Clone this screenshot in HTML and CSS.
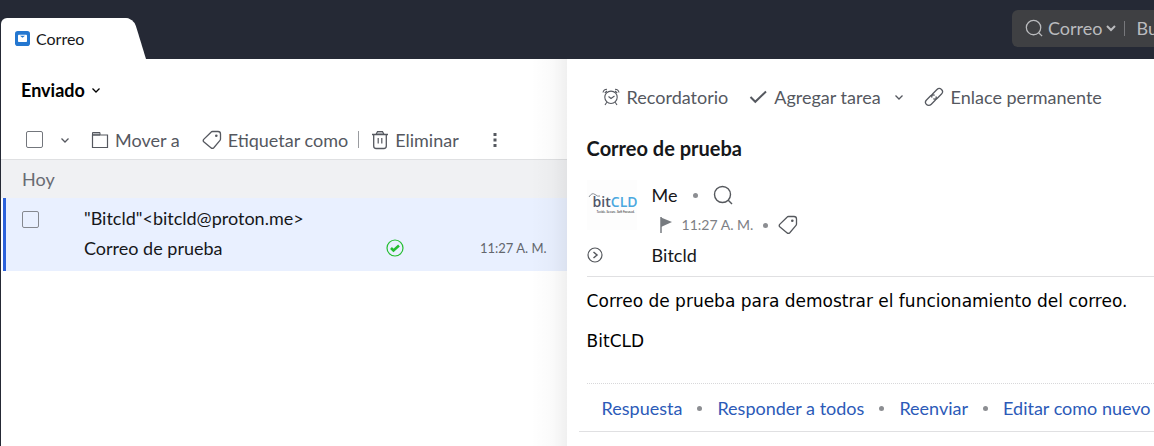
FILE: index.html
```html
<!DOCTYPE html>
<html lang="es">
<head>
<meta charset="utf-8">
<title>Correo</title>
<meta name="viewport" content="width=device-width, initial-scale=1">
<link rel="stylesheet" href="styles.css">
</head>
<body>
<svg class="sprite" aria-hidden="true">
  <symbol id="i-chevron" viewBox="0 0 10 10"><path d="M1.500 3.500 5 7l3.500-3.500" fill="none" stroke="currentColor" stroke-width="1.300"/></symbol>
  <symbol id="i-search" viewBox="0 0 20 20"><circle cx="9.500" cy="9.500" r="8" fill="none" stroke="currentColor" stroke-width="1.400"/><path d="m15 15 4 4" stroke="currentColor" stroke-width="1.400"/></symbol>
  <symbol id="i-tag" viewBox="0 0 20 20"><path d="M10.500 1.500H16q2.500 0 2.500 2.500v5q0 .8-.5 1.400l-6.200 7.300q-1.400 1.300-2.900 0l-6.900-5.600q-1.400-1.300-.3-2.700L9 2.200q.6-.7 1.500-.7Z" fill="none" stroke="currentColor" stroke-width="1.300"/><circle cx="14.300" cy="5.800" r="1.300" fill="currentColor"/></symbol>
</svg>

<header class="topbar">
  <div class="tab" role="tab" aria-selected="true">
    <svg class="tab-icon" viewBox="0 0 16 16"><rect width="16" height="16" rx="3" fill="#2477d0"/><path d="M4 4h8a.8.8 0 0 1 .8.8v6a.8.8 0 0 1-.8.8H4a.8.8 0 0 1-.8-.8v-6A.8.8 0 0 1 4 4Z" fill="#fff"/><path d="M5.300 5h5.400L8 7.300Z" fill="#2477d0"/></svg>
    <span>Correo</span>
  </div>
  <div class="search">
    <svg class="ic18"><use href="#i-search"/></svg>
    <button class="scope" type="button">Correo <svg class="scope-arrow" viewBox="0 0 10 10"><path d="M1 3 5 7l4-4" fill="none" stroke="currentColor" stroke-width="2"/></svg></button>
    <span class="search-sep"></span>
    <input class="search-input" type="text" placeholder="Buscar" aria-label="Buscar">
  </div>
</header>

<main class="panes">
  <section class="list-pane">
    <button class="folder" type="button">Enviado <svg class="ic10"><use href="#i-chevron"/></svg></button>
    <div class="list-tools">
      <input class="check" type="checkbox" aria-label="Seleccionar todo">
      <button class="tool more-select" type="button" aria-label="Opciones de selección"><svg class="ic10"><use href="#i-chevron"/></svg></button>
      <button class="tool move" type="button"><svg class="ic18" viewBox="0 0 18 18"><path d="M1.500 1.500h7.500V4H1.500Z" fill="#b9bbbf" stroke="currentColor"/><path d="M1.500 4h15v12.500h-15Z" fill="none" stroke="currentColor" stroke-width="1.200"/></svg>Mover a</button>
      <button class="tool label" type="button"><svg class="ic20"><use href="#i-tag"/></svg>Etiquetar como</button>
      <span class="bar"></span>
      <button class="tool" type="button"><svg class="trash" viewBox="0 0 18 20"><path d="M5 4.500 6.500 1.500h5L13 4.500Z" fill="#b9bbbf" stroke="currentColor" stroke-width="1.200"/><path d="M1 4.500h16M2.700 4.500V16q0 2.500 2.500 2.500h7.600q2.500 0 2.500-2.500V4.500" fill="none" stroke="currentColor" stroke-width="1.300"/><path d="M7.200 8v5.500M10.800 8v5.500" stroke="currentColor" stroke-width="1.200"/></svg>Eliminar</button>
      <button class="tool dots" type="button" aria-label="Más acciones"><svg viewBox="0 0 4 16"><path d="M.5 1h3v3h-3ZM.5 6.500h3v3h-3ZM.5 12h3v3h-3Z" fill="currentColor"/></svg></button>
    </div>
    <h2 class="day">Hoy</h2>
    <article class="mail">
      <input class="check" type="checkbox" aria-label="Seleccionar mensaje">
      <div class="mail-text">
        <div>"Bitcld"&lt;bitcld@proton.me&gt;</div>
        <div class="mail-line">
          <span class="mail-subject">Correo de prueba</span>
          <svg class="ic18" viewBox="0 0 18 18"><circle cx="9" cy="9" r="8" fill="none" stroke="#25bd31" stroke-width="1.200"/><path d="m5 9 2.500 2.500L13 6.500" fill="none" stroke="#25bd31" stroke-width="2.600"/></svg>
          <time>11:27 A. M.</time>
        </div>
      </div>
    </article>
  </section>

  <section class="read-pane">
    <div class="read-tools">
      <button class="tool" type="button"><svg class="ic18" viewBox="0 0 18 18"><g fill="none" stroke="currentColor" stroke-width="1.100"><circle cx="9" cy="9.300" r="6.200"/><path d="m6.500 8.500 2.500 2 3.500-2.500M4.800 14.200 3 17M13.200 14.200 15 17M1 4.500Q1.500 1.500 5 1.200M17 4.500Q16.500 1.500 13 1.200M2.800 5 5 3M15.200 5 13 3"/></g></svg>Recordatorio</button>
      <button class="tool" type="button"><svg class="ic18" viewBox="0 0 18 18"><path d="m1.500 9 4.800 4.800L17 3.500" fill="none" stroke="currentColor" stroke-width="2"/></svg>Agregar tarea</button>
      <button class="tool task-more" type="button" aria-label="Opciones de tarea"><svg class="ic10"><use href="#i-chevron"/></svg></button>
      <button class="tool" type="button"><svg class="ic20" viewBox="0 0 20 20"><g transform="rotate(-45 10 10)" fill="none" stroke="currentColor" stroke-width="1.300" stroke-linecap="round"><path d="M11.500 11.500q-1 1.700-3 1.700H2.600a3.200 3.200 0 0 1 0-6.400h5.900q2.200 0 3 2"/><path d="M8.500 8.500q1-1.700 3-1.700h5.900a3.200 3.200 0 0 1 0 6.400h-5.900q-2.200 0-3-2"/></g></svg>Enlace permanente</button>
    </div>
    <div class="message">
      <h1 class="subject">Correo de prueba</h1>
      <div class="meta">
        <div class="avatar"><span class="brand">bit<b>CLD</b></span><span class="tagline">Tecide. Secure. Soft Focused.</span>
          <svg class="swoosh" viewBox="0 0 14 6"><path d="M1 5Q4 0 7 2.500T12 4" fill="none" stroke="#8b8f96"/></svg></div>
        <div class="sender">
          <div class="line"><span>Me</span><i class="dot"></i><svg class="ic20 gray"><use href="#i-search"/></svg></div>
          <div class="line when"><svg class="flag" viewBox="0 0 12 16"><path d="M1 0v16" stroke="#777b80" stroke-width="1.500"/><path d="M1 .5 12 5 1 10Z" fill="#777b80"/></svg><time>11:27 A. M.</time><i class="dot"></i><svg class="ic20 gray"><use href="#i-tag"/></svg></div>
        </div>
        <button class="expand" type="button" aria-label="Mostrar detalles"><svg viewBox="0 0 16 16"><circle cx="8" cy="8" r="7" fill="none" stroke="currentColor" stroke-width="1.200"/><path d="m6.500 5 3.500 3-3.500 3" fill="none" stroke="currentColor" stroke-width="1.500"/></svg></button>
        <div class="recipient">Bitcld</div>
      </div>
      <div class="body">
        <p>Correo de prueba para demostrar el funcionamiento del correo.</p>
        <p>BitCLD</p>
      </div>
    </div>
    <nav class="replies">
      <a href="#">Respuesta</a><i class="dot"></i><a href="#">Responder a todos</a><i class="dot"></i><a href="#">Reenviar</a><i class="dot"></i><a href="#">Editar como nuevo</a>
    </nav>
  </section>
</main>
</body>
</html>
```
FILE: styles.css
```css
* { box-sizing: border-box; }
html, body { height: 100%; }
body {
  margin: 0;
  display: flex;
  flex-direction: column;
  overflow: hidden;
  background: #fff;
  color: #16171a;
  font: 18px/24px Lato, "Open Sans", sans-serif;
}
svg { display: block; flex: none; }
button, input { font: inherit; color: inherit; }
button { display: flex; align-items: center; padding: 0; border: 0; background: none; white-space: nowrap; flex: none; }
.sprite { position: absolute; width: 0; height: 0; }
.ic10 { width: 10px; height: 10px; }
.ic18 { width: 18px; height: 18px; }
.ic20 { width: 20px; height: 20px; }
.gray { color: #55585d; }

.topbar {
  display: flex;
  justify-content: space-between;
  align-items: flex-end;
  background: #252935;
  padding: 10px 0 0 1px;
}
.tab {
  position: relative;
  display: flex;
  align-items: center;
  gap: 6px;
  min-width: 132px;
  height: 41px;
  padding: 0 24px 0 14px;
  border-radius: 6px 8px 0 0;
  background: #fff;
  font-size: 16px;
  z-index: 0;
}
.tab::after {
  content: "";
  position: absolute;
  z-index: -1;
  inset: 0 -13px 0 50%;
  background: #fff;
  border-radius: 0 8px 0 0;
  transform: skewX(17deg);
  transform-origin: bottom;
}
.tab-icon { width: 15px; height: 15px; }
.search {
  display: flex;
  align-items: center;
  width: 142px;
  height: 37px;
  margin-bottom: 12px;
  padding: 0 0 1px 13px;
  border-radius: 6px 0 0 6px;
  background: #3f4043;
  color: #babbbe;
  overflow: hidden;
}
.scope { gap: 3px; margin-left: 5px; }
.scope-arrow { width: 10px; height: 10px; }
.search-sep { flex: none; width: 1px; height: 15px; margin: 0 12px 0 8px; background: #77787c; }
.search-input { flex: none; width: 160px; padding: 0; border: 0; background: none; }
.search-input::placeholder { color: inherit; opacity: 1; }

.panes { flex: 1; display: grid; grid-template-columns: 49.1% 1fr; }
.list-pane { min-width: 0; border-left: 1px solid #252935; position: relative; }
.list-pane::after {
  content: "";
  position: absolute;
  inset: 0 0 0 auto;
  width: 36px;
  background: linear-gradient(90deg, transparent, rgba(0, 0, 0, .02) 60%, rgba(0, 0, 0, .06));
}
.folder { gap: 6px; padding: 19px 20px 0; font-weight: 700; color: #000; }
.tool { gap: 6px; color: #55585f; }
.check {
  appearance: none;
  flex: none;
  width: 17px;
  height: 17px;
  margin: 0;
  border: 1px solid #73767c;
  border-radius: 2px;
}
.list-tools {
  display: flex;
  align-items: center;
  height: 58px;
  padding: 18px 0 0 25px;
  border-bottom: 1px solid #dfe0e2;
}
.more-select { margin: 0 21px 0 17px; }
.label { margin-left: 22px; }
.bar { width: 1px; height: 17px; margin: 0 12px 0 10px; background: #9a9ca0; }
.trash { width: 18px; height: 20px; }
.dots { margin-left: 34px; }
.dots svg { width: 4px; height: 16px; }
.day { margin: 0; padding: 7px 21px; background: #f0f1f3; color: #686b72; font-size: 18px; font-weight: 400; line-height: 24px; }
.mail {
  display: flex;
  margin-left: 2px;
  padding: 5px 20px 8px 16px;
  border-left: 3px solid #2c62dc;
  background: #e9f0ff;
  line-height: 30px;
}
.mail .check { margin: 8px 45px 0 0; border-color: #85888f; }
.mail-text { flex: 1; }
.mail-line { display: flex; align-items: center; }
.mail-subject { flex: 1; }
.mail-line time { width: 143px; text-align: right; font-size: 13px; color: #63666d; }

.read-pane { min-width: 0; overflow: hidden; }
.read-tools { display: flex; align-items: center; gap: 21px; padding: 26px 0 0 35px; }
.read-tools .tool { gap: 7px; }
.read-tools .task-more { margin: 0 -1px 0 -8px; }
.message { margin-left: 20px; }
.subject { margin: 0; padding-top: 26px; font-size: 20px; line-height: 26px; font-weight: 700; }
.meta {
  display: grid;
  grid-template-columns: 50px 1fr;
  column-gap: 15px;
  align-items: center;
  padding: 19px 0 6px;
  border-bottom: 1px solid #e0e0e2;
}
.avatar { position: relative; align-self: start; display: flex; flex-direction: column; height: 50px; padding: 15px 0 0 6px; background: #fdfdfd; white-space: nowrap; }
.brand { font: 600 14px/14px "Open Sans", sans-serif; color: #50566a; }
.brand b { font-weight: 600; color: #4aa8df; }
.tagline { margin-top: 1px; font-size: 3px; line-height: 4px; padding-left: 4px; }
.swoosh { position: absolute; left: 1px; top: 12px; width: 14px; height: 6px; }
.line { display: flex; align-items: center; height: 30px; }
.dot { flex: none; width: 5px; height: 5px; border-radius: 50%; background: #8c8e92; }
.line .dot { margin: 0 15px; }
.line.when .dot { margin: 0 10px; }
.when { padding-left: 8px; font-size: 14px; color: #7d8085; }
.when time { margin-left: 10px; }
.flag { width: 12px; height: 16px; }
.expand { align-self: center; color: #55585d; }
.expand svg { width: 16px; height: 16px; }
.recipient { line-height: 30px; }
.body { padding: 12px 0 30px; border-bottom: 1px dotted #d8d8da; font: 17px/24px "DejaVu Sans", sans-serif; color: #000; }
.body p { margin: 0 0 16px; white-space: nowrap; }
.body p:last-child { margin: 0; }
.replies {
  display: flex;
  align-items: center;
  gap: 15px;
  margin-left: 12px;
  padding: 12px 0 11px 23px;
  border-bottom: 1px solid #e0e0e2;
  white-space: nowrap;
}
.replies a { color: #2c5ab8; text-decoration: none; }
```
